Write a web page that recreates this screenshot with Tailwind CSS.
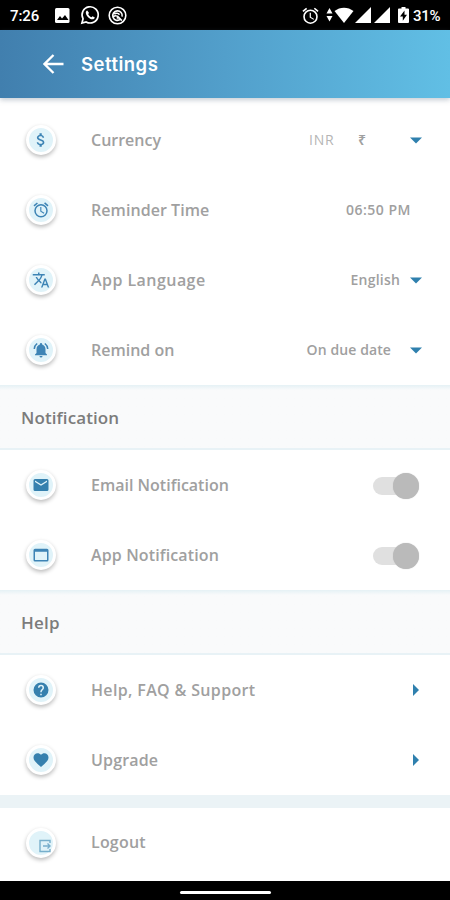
<!DOCTYPE html>
<html lang="en">
<head>
<meta charset="utf-8">
<title>Settings</title>
<script src="https://cdn.jsdelivr.net/npm/@tailwindcss/browser@4"></script>
</head>
<body class="w-[450px] h-[900px] overflow-hidden bg-[#f9fafb] flex flex-col font-['Open_Sans','Noto_Sans',sans-serif] font-semibold text-[#a0a0a0] text-[16px] leading-6 whitespace-nowrap">

<div class="h-[30px] shrink-0 bg-black text-white flex items-center pl-[10px] pr-[9px] font-['Roboto',sans-serif] font-medium text-[15px]">
  <span class="w-[45px] pt-px tracking-[-0.1px]">7:26</span>
  <svg class="size-[15px]" viewBox="0 0 15 15"><rect width="14.500" height="15" rx="1.500" fill="#fff"/><path d="M2 12l3-4 2 2.500 3-3.500 3.500 5z" fill="#000"/></svg>
  <svg class="ml-[10px] size-[20px]" viewBox="0 0 24 24"><path fill="none" stroke="#fff" stroke-width="2" d="M2.300 21.700l1.400-5.100A9.700 9.700 0 1 1 7.400 20.300z"/><path fill="#fff" d="M8.700 6.500c-1.200.4-1.900 1.500-1.700 3 .5 3.700 4.200 7.300 7.800 7.700 1.500.1 2.700-.8 3-2.200l-2.700-1.600-1.400 1.300c-1.700-.6-3.200-2-4-3.900l1.200-1.300z"/></svg>
  <svg class="ml-[8px] size-[19px]" viewBox="0 0 24 24" fill="none" stroke="#fff" stroke-width="2"><circle cx="12" cy="12" r="10.500"/><path d="M15.500 17A6 6 0 1 1 17.800 13.500M8 10.500c2-2 5-1.500 6.500.5M7 13.500c2-2 3.500-1 5-.5L17.500 18.500M11 15h2.500"/></svg>
  <div class="ml-auto flex items-center">
    <svg class="size-[17px]" viewBox="2 1 20 21"><path fill="#fff" d="M22 5.700l-4.600-3.900-1.300 1.500 4.600 3.900zM7.900 3.400L6.600 1.900 2 5.700l1.300 1.500zM12.500 8H11v6l4.700 2.900.8-1.200-4-2.400zM12 4a9 9 0 1 0 0 18 9 9 0 0 0 0-18zm0 16a7 7 0 1 1 0-14 7 7 0 0 1 0 14z"/></svg>
    <svg class="ml-[7px] w-[7px] h-[14px]" viewBox="0 0 7 14"><path fill="#fff" d="M3.500 0L6.500 5.500H.500zM.500 8h6L3.500 13.500z"/></svg>
    <svg class="ml-px w-[20px] h-[16px]" viewBox="0 0 20 16"><path fill="#fff" d="M.500 4C6 -.500 14-.500 19.500 4L10 16z"/></svg>
    <svg class="ml-[1px] size-[16px]" viewBox="0 0 16 16"><path fill="#fff" d="M16 0v16H0z"/></svg>
    <svg class="ml-[3px] size-[16px]" viewBox="0 0 16 16"><path fill="#fff" d="M16 0v16H0z"/></svg>
    <svg class="ml-[8px] w-[11px] h-[16px]" viewBox="0 0 11 16"><path fill="#fff" d="M3.500 0h4v1.500H10q1 0 1 1V15q0 1-1 1H1q-1 0-1-1V2.500q0-1 1-1h2.500z"/><path d="M6.500 3.500L2 9.500h2.800v4.300L9 7.700H6.500z" fill="#000"/></svg>
    <span class="ml-[4px] pt-px w-[28px] tracking-[-0.3px]">31%</span>
  </div>
</div>

<header class="relative h-[68px] shrink-0 bg-linear-to-r from-[#417fae] via-[#529fcb] to-[#61bfe5] flex items-center pl-[43px] shadow-[0_2px_5px_rgba(90,110,130,0.35)]">
  <svg class="w-[21px] h-[20px]" viewBox="0 0 21 20" fill="none" stroke="#fff" stroke-width="2.300"><path d="M20.500 10H2M10.500 1L1.500 10l9 9"/></svg>
  <h1 class="ml-[17px] pb-px text-white font-['Inter',sans-serif] font-semibold text-[18.500px] tracking-[0.5px]">Settings</h1>
</header>

<main class="flex flex-col">
  <section class="bg-white pt-[7px] h-[287px]">
    <div class="h-[70px] flex items-center pl-[26px] pr-[28px]">
      <span class="size-[30px] rounded-full bg-[#e0f3f9] border-[3px] border-white shadow-[0_2px_4px_rgba(0,0,0,0.27)] flex items-center justify-center"><svg class="size-[18px] shrink-0" viewBox="0 0 24 24" fill="#3d84b5"><path d="M11.800 10.900c-2.300-.6-3-1.200-3-2.100 0-1.100 1-1.900 2.700-1.900 1.800 0 2.400.9 2.500 2.100h2.200c-.1-1.700-1.100-3.300-3.200-3.800V3h-3v2.200c-1.900.4-3.500 1.700-3.500 3.600 0 2.300 1.900 3.500 4.700 4.100 2.500.6 3 1.500 3 2.400 0 .7-.5 1.800-2.700 1.800-2.100 0-2.900-.9-3-2.100H6.300c.1 2.200 1.800 3.400 3.700 3.800V21h3v-2.100c2-.4 3.500-1.500 3.500-3.600 0-2.800-2.400-3.800-4.700-4.400z"/></svg></span>
      <span class="ml-[35px]">Currency</span>
      <span class="ml-auto text-[14px] text-[#b5b5b5] font-normal w-[49px] tracking-[0.8px]">INR</span>
      <span class="text-[14px] w-[52px]">₹</span>
      <svg class="w-[12px] h-[7px]" viewBox="0 0 12 7"><path d="M0 .500h12l-6 6z" fill="#2f80ae"/></svg>
    </div>
    <div class="h-[70px] flex items-center pl-[26px] pr-[39px]">
      <span class="size-[30px] rounded-full bg-[#e0f3f9] border-[3px] border-white shadow-[0_2px_4px_rgba(0,0,0,0.27)] flex items-center justify-center"><svg class="size-[18px] shrink-0" viewBox="0 0 24 24" fill="#3d84b5"><path d="M22 5.700l-4.600-3.900-1.300 1.500 4.600 3.900zM7.900 3.400L6.600 1.900 2 5.700l1.300 1.500zM12.500 8H11v6l4.700 2.900.8-1.200-4-2.400zM12 4a9 9 0 1 0 0 18 9 9 0 0 0 0-18zm0 16a7 7 0 1 1 0-14 7 7 0 0 1 0 14z"/></svg></span>
      <span class="ml-[35px] tracking-[0.06px]">Reminder Time</span>
      <span class="ml-auto text-[14px] tracking-[0.5px]">06:50 PM</span>
    </div>
    <div class="h-[70px] flex items-center pl-[26px] pr-[28px]">
      <span class="size-[30px] rounded-full bg-[#e0f3f9] border-[3px] border-white shadow-[0_2px_4px_rgba(0,0,0,0.27)] flex items-center justify-center"><svg class="size-[18px] shrink-0" viewBox="0 0 24 24" fill="#3d84b5"><path d="M12.870 15.070l-2.540-2.510.03-.03A17.500 17.500 0 0 0 14.070 6H17V4h-7V2H8v2H1v2h11.170A15.700 15.700 0 0 1 9 11.350 15.500 15.500 0 0 1 6.690 8h-2a17.600 17.600 0 0 0 2.980 4.560l-5.090 5.020L4 19l5-5 3.110 3.110zM18.500 10h-2L12 22h2l1.120-3h4.750L21 22h2zm-2.620 7l1.620-4.330L19.120 17z"/></svg></span>
      <span class="ml-[35px] tracking-[0.45px]">App Language</span>
      <span class="ml-auto mr-[10px] text-[14px] tracking-[0.2px]">English</span>
      <svg class="w-[12px] h-[7px]" viewBox="0 0 12 7"><path d="M0 .500h12l-6 6z" fill="#2f80ae"/></svg>
    </div>
    <div class="h-[70px] flex items-center pl-[26px] pr-[28px]">
      <span class="size-[30px] rounded-full bg-[#e0f3f9] border-[3px] border-white shadow-[0_2px_4px_rgba(0,0,0,0.27)] flex items-center justify-center"><svg class="size-[18px] shrink-0" viewBox="0 0 24 24" fill="#3d84b5"><path d="M7.580 4.080L6.150 2.650A10.500 10.500 0 0 0 2.030 10.500h2a8.400 8.400 0 0 1 3.550-6.420zM19.970 10.500h2a10.500 10.500 0 0 0-4.120-7.850l-1.420 1.430a8.500 8.500 0 0 1 3.540 6.420zM18 11c0-3.070-1.640-5.640-4.500-6.320V4a1.500 1.500 0 0 0-3 0v.68C7.630 5.360 6 7.920 6 11v5l-2 2v1h16v-1l-2-2zM12 22a2 2 0 0 0 2-2h-4a2 2 0 0 0 2 2z"/></svg></span>
      <span class="ml-[35px]">Remind on</span>
      <span class="ml-auto mr-[19px] text-[14px] tracking-[0.1px]">On due date</span>
      <svg class="w-[12px] h-[7px]" viewBox="0 0 12 7"><path d="M0 .500h12l-6 6z" fill="#2f80ae"/></svg>
    </div>
  </section>

  <h2 class="h-[65px] pl-[21px] pt-[2px] flex items-center text-[17px] tracking-[0.1px] text-[#7c7c7c] bg-linear-to-b from-[#e5f1f5] from-0% via-[#f9fafb] via-8% to-[#f9fafb] to-100% border-b-2 border-[#e8f2f6]">Notification</h2>

  <section class="bg-white">
    <div class="h-[70px] flex items-center pl-[26px] pr-[31px]">
      <span class="size-[30px] rounded-full bg-[#e0f3f9] border-[3px] border-white shadow-[0_2px_4px_rgba(0,0,0,0.27)] flex items-center justify-center"><svg class="size-[18px] shrink-0" viewBox="0 0 24 24" fill="#3580ae"><path d="M20 4H4a2 2 0 0 0-2 2v12a2 2 0 0 0 2 2h16a2 2 0 0 0 2-2V6a2 2 0 0 0-2-2zm0 4l-8 5-8-5V6l8 5 8-5z"/></svg></span>
      <span class="ml-[35px]">Email Notification</span>
      <span class="ml-auto mt-px flex items-center"><span class="w-[33px] h-[18px] rounded-full bg-[#e0e0e0]"></span><span class="-ml-[13px] size-[26px] rounded-full bg-[#bababa] shadow-[0_0_1px_#bbb]"></span></span>
    </div>
    <div class="h-[70px] flex items-center pl-[26px] pr-[31px]">
      <span class="size-[30px] rounded-full bg-[#e0f3f9] border-[3px] border-white shadow-[0_2px_4px_rgba(0,0,0,0.27)] flex items-center justify-center"><svg class="size-[18px] shrink-0" viewBox="0 0 24 24" fill="#3d84b5"><path fill-rule="evenodd" d="M20 3.500H4a2 2 0 0 0-2 2v13a2 2 0 0 0 2 2h16a2 2 0 0 0 2-2v-13a2 2 0 0 0-2-2zm0 15H4V7.500h16z"/></svg></span>
      <span class="ml-[35px] tracking-[0.13px]">App Notification</span>
      <span class="ml-auto mt-px flex items-center"><span class="w-[33px] h-[18px] rounded-full bg-[#e0e0e0]"></span><span class="-ml-[13px] size-[26px] rounded-full bg-[#bababa] shadow-[0_0_1px_#bbb]"></span></span>
    </div>
  </section>

  <h2 class="h-[65px] pl-[21px] pt-[2px] flex items-center text-[17px] tracking-[0.2px] text-[#7c7c7c] bg-linear-to-b from-[#e5f1f5] from-0% via-[#f9fafb] via-8% to-[#f9fafb] to-100% border-b-2 border-[#e8f2f6]">Help</h2>

  <section class="bg-white">
    <div class="h-[70px] flex items-center pl-[26px] pr-[31px]">
      <span class="size-[30px] rounded-full bg-[#e0f3f9] border-[3px] border-white shadow-[0_2px_4px_rgba(0,0,0,0.27)] flex items-center justify-center"><svg class="size-[18px] shrink-0" viewBox="0 0 24 24" fill="#3580ae"><path d="M12 2a10 10 0 1 0 0 20 10 10 0 0 0 0-20zm1 17h-2v-2h2zm2.070-7.750l-.9.920C13.450 12.900 13 13.500 13 15h-2v-.5c0-1.100.45-2.100 1.170-2.830l1.240-1.260A2 2 0 1 0 10 9H8a4 4 0 0 1 8 0c0 .88-.36 1.680-.93 2.250z"/></svg></span>
      <span class="ml-[35px] tracking-[0.35px]">Help, FAQ &amp; Support</span>
      <svg class="ml-auto w-[6px] h-[12px]" viewBox="0 0 6 12"><path d="M0 0l6 6-6 6z" fill="#2f80ae"/></svg>
    </div>
    <div class="h-[70px] flex items-center pl-[26px] pr-[31px]">
      <span class="size-[30px] rounded-full bg-[#e0f3f9] border-[3px] border-white shadow-[0_2px_4px_rgba(0,0,0,0.27)] flex items-center justify-center"><svg class="size-[18px] shrink-0" viewBox="0 0 24 24" fill="#3580ae"><path d="M12 21.350l-1.450-1.320C5.400 15.360 2 12.280 2 8.500 2 5.420 4.420 3 7.500 3c1.740 0 3.410.81 4.500 2.090C13.090 3.810 14.760 3 16.500 3 19.580 3 22 5.420 22 8.500c0 3.780-3.400 6.860-8.550 11.540z"/></svg></span>
      <span class="ml-[35px] tracking-[0.15px]">Upgrade</span>
      <svg class="ml-auto w-[6px] h-[12px]" viewBox="0 0 6 12"><path d="M0 0l6 6-6 6z" fill="#2f80ae"/></svg>
    </div>
  </section>

  <div class="h-[13px] bg-[#ebf3f6]"></div>

  <section class="bg-white h-[73px] flex items-center pl-[26px] pb-[4px]">
    <span class="size-[30px] rounded-full bg-[#e0f3f9] border-[3px] border-white shadow-[0_2px_4px_rgba(0,0,0,0.27)] flex items-center justify-center"><svg class="size-[14px] shrink-0 ml-[7px] mt-[7px]" viewBox="0 0 14 14" fill="none" stroke="#77afcc" stroke-width="1.400"><path d="M12 4V1.500H2v11h10V10M5 7h7M9.500 4.500L12 7l-2.500 2.500"/></svg></span>
    <span class="ml-[35px] pb-px tracking-[0.2px]">Logout</span>
  </section>
</main>

<div class="h-[19px] shrink-0 bg-black flex items-center justify-center"><span class="w-[91px] h-[3px] rounded-full bg-white mt-[3px]"></span></div>
</body>
</html>
